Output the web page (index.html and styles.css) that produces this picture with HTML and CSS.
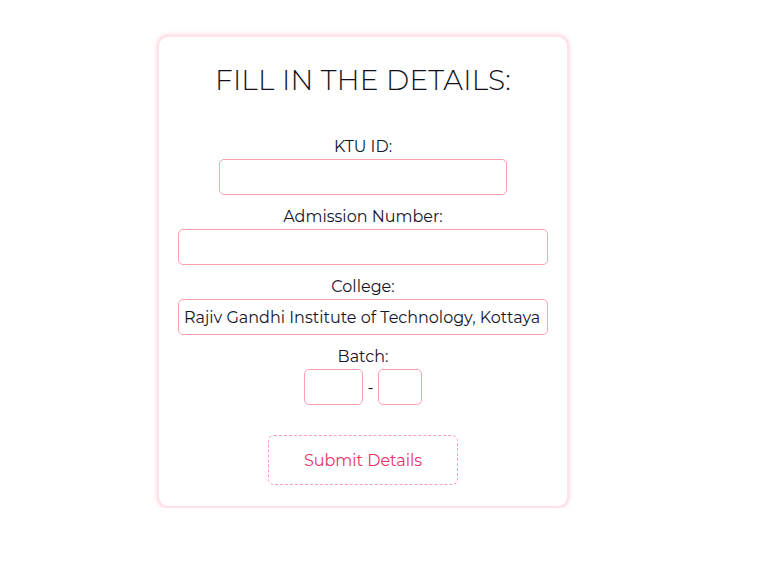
FILE: index.html
```html
<!DOCTYPE html>
<html lang="en">
<head>
<meta charset="utf-8">
<title>Fill in the details</title>
<link rel="stylesheet" href="styles.css">
</head>
<body>
<div class="page">
  <form class="card">
    <h1 class="title">FILL IN THE DETAILS:</h1>
    <div class="fields">
      <div class="field">
        <label class="label" for="ktu">KTU ID:</label>
        <input class="input input-ktu" id="ktu" type="text">
      </div>
      <div class="field">
        <label class="label" for="adm">Admission Number:</label>
        <input class="input input-wide" id="adm" type="text">
      </div>
      <div class="field">
        <label class="label" for="college">College:</label>
        <input class="input input-wide" id="college" type="text" value="Rajiv Gandhi Institute of Technology, Kottayam">
      </div>
      <div class="field">
        <label class="label">Batch:</label>
        <div class="batch">
          <input class="input input-from" type="text">
          <span class="dash">-</span>
          <input class="input input-to" type="text">
        </div>
      </div>
    </div>
    <button class="submit" type="button">Submit Details</button>
  </form>
</div>
</body>
</html>
```

FILE: styles.css
```css
html, body {
  margin: 0;
  padding: 0;
  background: #ffffff;
}
body {
  font-family: "Montserrat", "DejaVu Sans", "Noto Sans", sans-serif;
  color: #15152a;
}
.page {
  padding: 35px 0 0 157px;
}
.card {
  box-sizing: border-box;
  width: 412px;
  height: 473px;
  border: 2px solid #ffe1e7;
  border-radius: 11px;
  box-shadow: 0 0 5px #ffd3dc;
  background: #ffffff;
  display: flex;
  flex-direction: column;
  align-items: center;
  padding-top: 26px;
}
.title {
  margin: 0;
  font-size: 28px;
  line-height: 34px;
  font-weight: 300;
  letter-spacing: 0.2px;
  color: #10101c;
}
.fields {
  margin-top: 40px;
  display: flex;
  flex-direction: column;
  align-items: center;
  gap: 12px;
}
.field {
  display: flex;
  flex-direction: column;
  align-items: center;
}
.label {
  font-size: 16px;
  line-height: 20px;
  margin-bottom: 2px;
}
.input {
  box-sizing: border-box;
  height: 36px;
  border: 1px solid #ff9fae;
  border-radius: 5px;
  background: #ffffff;
  font-family: inherit;
  font-size: 16px;
  color: #15152a;
  padding: 0 7px 0 5px;
  outline: none;
}
.input-ktu { width: 288px; }
.input-wide { width: 370px; }
.batch {
  display: flex;
  align-items: center;
  gap: 4px;
}
.input-from { width: 59px; }
.input-to { width: 44px; }
.dash {
  font-size: 16px;
}
.submit {
  margin-top: 30px;
  box-sizing: border-box;
  width: 190px;
  height: 50px;
  border: 1px dashed #ff9fb4;
  border-radius: 6px;
  background: transparent;
  font-family: inherit;
  font-size: 16px;
  color: #e9336a;
}
```
